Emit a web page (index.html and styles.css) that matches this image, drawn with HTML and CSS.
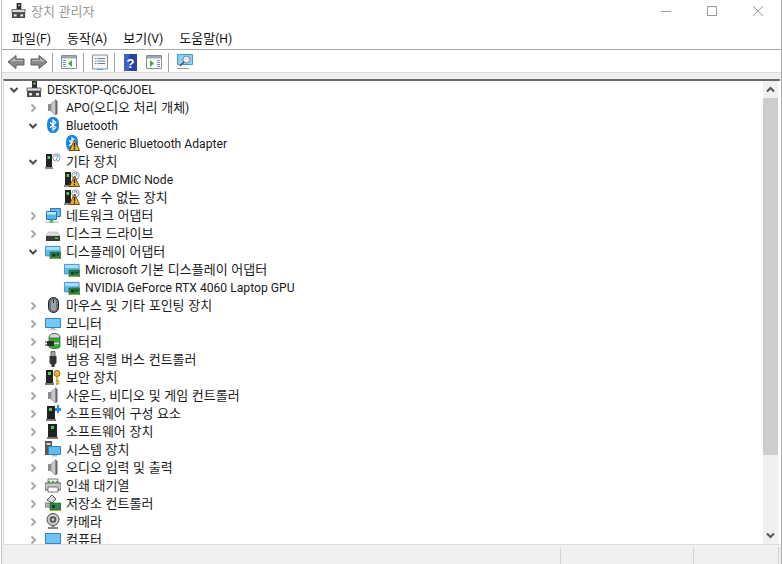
FILE: index.html
```html
<!DOCTYPE html>
<html lang="ko">
<head>
<meta charset="utf-8">
<title>장치 관리자</title>
<link rel="stylesheet" href="styles.css">
</head>
<body>
<svg class="defs" aria-hidden="true">
  <defs>
    <symbol id="open" viewBox="0 0 10 10"><path d="M1.500 3l3.500 3.500L8.500 3" fill="none" stroke="#4a4a4a" stroke-width="2"/></symbol>
    <symbol id="closed" viewBox="0 0 10 10"><path d="M3.500 1.500L7 5 3.500 8.500" fill="none" stroke="#a8a8a8" stroke-width="2"/></symbol>
    <symbol id="warn" viewBox="0 0 16 16"><path d="M10.500 5L15.600 15.500H5.400z" fill="#f3b32a" stroke="#5e4008" stroke-width=".9"/><path d="M9.800 8h1.400v4.200H9.800zM9.800 13h1.400v1.500H9.800z" fill="#1c1c1c"/></symbol>
    <symbol id="root" viewBox="0 0 16 16"><path d="M6 0h5v7H6z" fill="#2e2e2e"/><path d="M7.500 1.500h2v2h-2z" fill="#7ed07a"/><path d="M1 7h14v3H1z" fill="#e4e4e4" stroke="#444" stroke-width=".8"/><path d="M1 10h14v6H1z" fill="#484848"/><path d="M3 12h3v2.500H3zM10 12h3v2.500h-3z" fill="#e2e2e2"/></symbol>
    <symbol id="speaker" viewBox="0 0 16 16"><path d="M3 5h3v7H3z" fill="#8e8e8e"/><path d="M6 5l5-4.500v16L6 12z" fill="#c8c8c8" stroke="#8a8a8a" stroke-width=".7"/><path d="M10.500 .5v16l2-2V2.500z" fill="#666"/></symbol>
    <symbol id="bt" viewBox="0 0 16 16"><path d="M8 0c4 0 6 2.500 6 8s-2 8-6 8-6-2.500-6-8 2-8 6-8z" fill="#1685e8"/><path d="M5 5.200L10.800 10.500 8 13.200V2.800L10.800 5.500 5 10.800" fill="none" stroke="#fff" stroke-width="1.200"/></symbol>
    <symbol id="unknown" viewBox="0 0 16 16"><path d="M1 1h6v13H1z" fill="#222"/><path d="M2.500 3h2.500v3H2.500z" fill="#4bd04b"/><path d="M0 14h8v2H0z" fill="#888"/><circle cx="11.500" cy="4.500" r="3.700" fill="#f4f8fc" stroke="#8a9aa8"/><path d="M10 3.500c.3-1.500 3-1.500 3 0 0 1-1.500 1-1.500 2M11.200 6.500h.8" fill="none" stroke="#4c84c0"/></symbol>
    <symbol id="network" viewBox="0 0 16 16"><path d="M5.500 1.500h10v8h-10z" fill="#68b8ec" stroke="#2a7cb8"/><path d="M1.500 4.500h10v8h-10z" fill="#58b4ec" stroke="#1f78b4"/><path d="M2 5h9v2.500H2z" fill="#bfe4fa"/><path d="M5 13h3v1.500H5z" fill="#44b044"/><path d="M0 14.500h14V16H0z" fill="#cfcfcf"/><path d="M4 14.500h5v1H4z" fill="#35b035"/></symbol>
    <symbol id="disk" viewBox="0 0 16 16"><path d="M3.500 7h9l2.500 4H1z" fill="#dcdcdc" stroke="#aaa" stroke-width=".6"/><path d="M1 11h14v5H1z" fill="#3a3a3a"/><path d="M10 12.500h3V14h-3z" fill="#4cd04c"/></symbol>
    <symbol id="display" viewBox="0 0 16 16"><path d="M.4 3.400h14.700v9.500H.4z" fill="#5db9ee" stroke="#2b87c0" stroke-width=".8"/><path d="M1 4h13.500v3H1z" fill="#a8dcf8"/><path d="M5 9h10.500v6.500H5z" fill="#2c8a4c" stroke="#15602f" stroke-width=".6"/><path d="M7 10.500h3.500v3H7zM11.500 10.500h2.500v2h-2.500z" fill="#143c20"/><path d="M6 15.200h8v.8H6z" fill="#c9a227"/></symbol>
    <symbol id="mouse" viewBox="0 0 16 16"><rect x="3.500" y=".5" width="10" height="15" rx="5" fill="#6e747c" stroke="#1c1c1c"/><path d="M6 4c0-2 5-2 5 0v8c0 2-5 2-5 0z" fill="#9aa0a8"/><path d="M8 2h1v4H8z" fill="#222"/></symbol>
    <symbol id="monitor" viewBox="0 0 16 16"><path d="M.5 3.500h15v9H.5z" fill="#76c8f6" stroke="#2b87c0"/><path d="M6 13h4v1.500H6z" fill="#b0b0b0"/><path d="M3 14.500h10v1H3z" fill="#c8c8c8"/></symbol>
    <symbol id="battery" viewBox="0 0 16 16"><ellipse cx="9.500" cy="4" rx="5.500" ry="3.500" fill="#d8d8d8" stroke="#555"/><path d="M4 5h11v9c-2 2-9 2-11 0z" fill="#3aa83a" stroke="#1b6a1b" stroke-width=".7"/><path d="M2 8h7v5H2z" fill="#2c2c2c"/><path d="M0 9h3M0 12h3" stroke="#333"/><path d="M9 10.500h5" stroke="#ddd" stroke-width="1.500"/></symbol>
    <symbol id="usb" viewBox="0 0 16 16"><path d="M6 .5h4v5H6z" fill="#a0a0a0" stroke="#444" stroke-width=".7"/><path d="M4.500 5h7v7l-2 2v2h-3v-2l-2-2z" fill="#333"/></symbol>
    <symbol id="security" viewBox="0 0 16 16"><path d="M1 1h7v13H1z" fill="#222"/><path d="M3 3h3v3H3z" fill="#4bd04b"/><path d="M0 14h9v2H0z" fill="#777"/><circle cx="12" cy="4.500" r="3" fill="#e2b646" stroke="#8a6a14"/><path d="M12 7.500V16M12 12h2.500M12 14.500h2.500" stroke="#c99a20" stroke-width="1.500"/></symbol>
    <symbol id="swcomp" viewBox="0 0 16 16"><path d="M2 1h8v13H2z" fill="#222"/><path d="M4 3h3v3H4z" fill="#4bd04b"/><path d="M1 14h10v2H1z" fill="#777"/><path d="M10 3h2V0h2v3h2v3h-2v2h-2V6h-2z" fill="#2f8fd8"/></symbol>
    <symbol id="swdev" viewBox="0 0 16 16"><path d="M3 1h9v13H3z" fill="#222"/><path d="M6 3h3v3H6z" fill="#4bd04b"/><path d="M2 14h11v2H2z" fill="#777"/></symbol>
    <symbol id="system" viewBox="0 0 16 16"><path d="M0 0h7v14H0z" fill="#555"/><path d="M1.500 2h4v2h-4z" fill="#d8d8d8"/><path d="M3.500 5.500h12v8h-12z" fill="#5dbcf0" stroke="#2b87c0"/><path d="M7 14h5v1.500H7z" fill="#b8b8b8"/></symbol>
    <symbol id="printer" viewBox="0 0 16 16"><path d="M3 2h10v4H3z" fill="#eee" stroke="#666" stroke-width=".8"/><path d="M0 6h16v7H0z" fill="#c8c8c8" stroke="#444" stroke-width=".8"/><path d="M3 4h2v1.500H3zM7 4h2v1.500H7zM11 4h2v1.500h-2z" fill="#35b035"/><path d="M3 10h10v5H3z" fill="#fff" stroke="#555" stroke-width=".8"/></symbol>
    <symbol id="storage" viewBox="0 0 16 16"><path d="M2 5l5-5 4 4-4 4z" fill="#ddd" stroke="#444" stroke-width=".9"/><path d="M0 8h9v4H0z" fill="#b8b8b8" stroke="#555" stroke-width=".7"/><path d="M5 8h11v7H5z" fill="#2c8a4c" stroke="#15602f" stroke-width=".6"/><path d="M7 10h3v3H7z" fill="#143c20"/><path d="M5 15h11v1H5z" fill="#c9a227"/></symbol>
    <symbol id="camera" viewBox="0 0 16 16"><circle cx="8" cy="6.500" r="6" fill="#cfcfcf" stroke="#444"/><circle cx="8" cy="6.500" r="3.300" fill="#555"/><circle cx="8" cy="6.500" r="1.500" fill="#bcd"/><path d="M6.500 12.500h3V14h-3zM3 14h10v2H3z" fill="#888"/></symbol>
    <symbol id="computer" viewBox="0 0 16 16"><path d="M.5 2.500h15v10H.5z" fill="#72c2f4" stroke="#2b87c0"/></symbol>
    <symbol id="arrow" viewBox="0 0 18 16"><path d="M9 1.500L1 8l8 6.500V11h8V5H9z" fill="#8a8a8a" stroke="#5e5e5e"/><path d="M3 8l5-4v2h8v1H8z" fill="#bdbdbd"/></symbol>
    <symbol id="tb-left" viewBox="0 0 16 16"><path d="M.5 1.500h15v13H.5z" fill="#fff" stroke="#7f8f9c"/><path d="M1 2h14v2.500H1z" fill="#9aa7b2"/><path d="M2 6h3v1H2zM2 8h3v1H2zM2 10h3v1H2zM2 12h3v1H2z" fill="#6f8ea8"/><path d="M11 6v7L7 9.500z" fill="#38b038"/></symbol>
    <symbol id="tb-right" viewBox="0 0 16 16"><path d="M.5 1.500h15v13H.5z" fill="#fff" stroke="#7f8f9c"/><path d="M1 2h14v2.500H1z" fill="#9aa7b2"/><path d="M11 6h3v1h-3zM11 8h3v1h-3zM11 10h3v1h-3zM11 12h3v1h-3z" fill="#6f8ea8"/><path d="M4 6v7l4-3.500z" fill="#38b038"/></symbol>
    <symbol id="tb-props" viewBox="0 0 16 16"><path d="M.5 1h15v14H.5z" fill="#f2f4f6" stroke="#8a8f94"/><path d="M3 4h1.500v1H3zM3 6.500h1.500v1H3zM3 9h1.500v1H3zM5.500 4H13v1H5.500zM5.500 6.500H13v1H5.500zM5.500 9H13v1H5.500z" fill="#6d8298"/><path d="M5 15h6v1H5z" fill="#35a8e8"/></symbol>
    <symbol id="tb-help" viewBox="0 0 13 17"><path d="M0 0h13v17H0z" fill="#2743a8"/><path d="M0 0h5v17H0z" fill="#3f62c6"/><text x="6.500" y="14" class="qmark">?</text></symbol>
    <symbol id="tb-scan" viewBox="0 0 16 16"><path d="M.5 .5h15v10H.5z" fill="#8dd0f6" stroke="#3f9ad0"/><circle cx="9.500" cy="5.500" r="3.500" fill="#dcecf4" stroke="#7b8a94"/><path d="M7 8l-4 4" stroke="#555" stroke-width="1.600"/><path d="M0 14h12v1H0z" fill="#999"/></symbol>
    <symbol id="win-warn-bt" viewBox="0 0 16 16"><use href="#bt"/><use href="#warn"/></symbol>
    <symbol id="win-warn-un" viewBox="0 0 16 16"><use href="#unknown"/><use href="#warn"/></symbol>
  </defs>
</svg>
<div class="window">
  <header class="titlebar">
    <svg class="title-icon"><use href="#root"/></svg>
    <span class="title-text ko">장치 관리자</span>
    <div class="controls">
      <svg class="ctl" viewBox="0 0 10 10"><path d="M0 5.500h10" stroke="#999"/></svg>
      <svg class="ctl" viewBox="0 0 10 10"><path d="M.5 .5h9v9h-9z" fill="none" stroke="#999"/></svg>
      <svg class="ctl" viewBox="0 0 10 10"><path d="M0 0l10 10M10 0L0 10" stroke="#999"/></svg>
    </div>
  </header>
  <nav class="menubar">
    <span class="menu"><span class="ko">파일</span>(F)</span>
    <span class="menu"><span class="ko">동작</span>(A)</span>
    <span class="menu"><span class="ko">보기</span>(V)</span>
    <span class="menu"><span class="ko">도움말</span>(H)</span>
  </nav>
  <div class="toolbar">
    <svg class="tb-arrow"><use href="#arrow"/></svg>
    <svg class="tb-arrow flip"><use href="#arrow"/></svg>
    <i class="sep"></i>
    <svg class="tb-ic"><use href="#tb-left"/></svg>
    <i class="sep"></i>
    <svg class="tb-ic"><use href="#tb-props"/></svg>
    <i class="sep"></i>
    <svg class="tb-ic help"><use href="#tb-help"/></svg>
    <svg class="tb-ic"><use href="#tb-right"/></svg>
    <i class="sep"></i>
    <svg class="tb-ic"><use href="#tb-scan"/></svg>
  </div>
  <div class="band"></div>
  <main class="pane">
    <ul class="tree">
      <li class="row l0"><svg class="chev"><use href="#open"/></svg><svg class="ic"><use href="#root"/></svg><span class="en">DESKTOP-QC6JOEL</span></li>
      <li class="row l1"><svg class="chev"><use href="#closed"/></svg><svg class="ic"><use href="#speaker"/></svg><span class="en mix">APO(<span class="ko">오디오 처리 개체</span>)</span></li>
      <li class="row l1"><svg class="chev"><use href="#open"/></svg><svg class="ic"><use href="#bt"/></svg><span class="en">Bluetooth</span></li>
      <li class="row l2"><svg class="chev"></svg><svg class="ic"><use href="#win-warn-bt"/></svg><span class="en">Generic Bluetooth Adapter</span></li>
      <li class="row l1"><svg class="chev"><use href="#open"/></svg><svg class="ic"><use href="#unknown"/></svg><span class="ko">기타 장치</span></li>
      <li class="row l2"><svg class="chev"></svg><svg class="ic"><use href="#win-warn-un"/></svg><span class="en">ACP DMIC Node</span></li>
      <li class="row l2"><svg class="chev"></svg><svg class="ic"><use href="#win-warn-un"/></svg><span class="ko">알 수 없는 장치</span></li>
      <li class="row l1"><svg class="chev"><use href="#closed"/></svg><svg class="ic"><use href="#network"/></svg><span class="ko">네트워크 어댑터</span></li>
      <li class="row l1"><svg class="chev"><use href="#closed"/></svg><svg class="ic"><use href="#disk"/></svg><span class="ko">디스크 드라이브</span></li>
      <li class="row l1"><svg class="chev"><use href="#open"/></svg><svg class="ic"><use href="#display"/></svg><span class="ko">디스플레이 어댑터</span></li>
      <li class="row l2"><svg class="chev"></svg><svg class="ic"><use href="#display"/></svg><span class="en mix">Microsoft <span class="ko">기본 디스플레이 어댑터</span></span></li>
      <li class="row l2"><svg class="chev"></svg><svg class="ic"><use href="#display"/></svg><span class="en">NVIDIA GeForce RTX 4060 Laptop GPU</span></li>
      <li class="row l1"><svg class="chev"><use href="#closed"/></svg><svg class="ic"><use href="#mouse"/></svg><span class="ko">마우스 및 기타 포인팅 장치</span></li>
      <li class="row l1"><svg class="chev"><use href="#closed"/></svg><svg class="ic"><use href="#monitor"/></svg><span class="ko">모니터</span></li>
      <li class="row l1"><svg class="chev"><use href="#closed"/></svg><svg class="ic"><use href="#battery"/></svg><span class="ko">배터리</span></li>
      <li class="row l1"><svg class="chev"><use href="#closed"/></svg><svg class="ic"><use href="#usb"/></svg><span class="ko">범용 직렬 버스 컨트롤러</span></li>
      <li class="row l1"><svg class="chev"><use href="#closed"/></svg><svg class="ic"><use href="#security"/></svg><span class="ko">보안 장치</span></li>
      <li class="row l1"><svg class="chev"><use href="#closed"/></svg><svg class="ic"><use href="#speaker"/></svg><span class="ko">사운드, 비디오 및 게임 컨트롤러</span></li>
      <li class="row l1"><svg class="chev"><use href="#closed"/></svg><svg class="ic"><use href="#swcomp"/></svg><span class="ko">소프트웨어 구성 요소</span></li>
      <li class="row l1"><svg class="chev"><use href="#closed"/></svg><svg class="ic"><use href="#swdev"/></svg><span class="ko">소프트웨어 장치</span></li>
      <li class="row l1"><svg class="chev"><use href="#closed"/></svg><svg class="ic"><use href="#system"/></svg><span class="ko">시스템 장치</span></li>
      <li class="row l1"><svg class="chev"><use href="#closed"/></svg><svg class="ic"><use href="#speaker"/></svg><span class="ko">오디오 입력 및 출력</span></li>
      <li class="row l1"><svg class="chev"><use href="#closed"/></svg><svg class="ic"><use href="#printer"/></svg><span class="ko">인쇄 대기열</span></li>
      <li class="row l1"><svg class="chev"><use href="#closed"/></svg><svg class="ic"><use href="#storage"/></svg><span class="ko">저장소 컨트롤러</span></li>
      <li class="row l1"><svg class="chev"><use href="#closed"/></svg><svg class="ic"><use href="#camera"/></svg><span class="ko">카메라</span></li>
      <li class="row l1"><svg class="chev"><use href="#closed"/></svg><svg class="ic"><use href="#computer"/></svg><span class="ko">컴퓨터</span></li>
    </ul>
    <div class="scrollbar">
      <svg class="sb-btn" viewBox="0 0 15 17"><path d="M4 10.500l3.500-3.500 3.500 3.500" fill="none" stroke="#555" stroke-width="2"/></svg>
      <div class="thumb"></div>
      <svg class="sb-btn end" viewBox="0 0 15 17"><path d="M4 6.500l3.500 3.500 3.500-3.500" fill="none" stroke="#555" stroke-width="2"/></svg>
    </div>
  </main>
  <footer class="statusbar">
    <div class="cell main"></div>
    <div class="cell mid"></div>
    <div class="cell last"></div>
  </footer>
</div>
</body>
</html>
```
FILE: styles.css
```css
* { box-sizing: border-box; }
html, body { margin: 0; height: 100%; background: #fff; overflow: hidden; }
body { font: 12.15px/18px Roboto, "Noto Sans CJK KR", sans-serif; color: #1a1a1a; }
.defs { width: 0; height: 0; display: block; }
.qmark { font: bold 13px "Liberation Sans", sans-serif; fill: #fff; text-anchor: middle; }
.ko { font-family: "Noto Sans CJK KR", sans-serif; font-size: 13px; }
.window { display: flex; flex-direction: column; width: 781px; height: 564px; margin-left: 1px; border-left: 1px solid #c4c4c4; border-right: 1px solid #aaa; }

.titlebar { display: flex; align-items: center; height: 29px; padding: 0 0 8px 9px; flex: none; }
.title-icon { width: 15px; height: 15px; }
.title-text { margin-left: 5px; color: #999; line-height: 18px; }
.controls { display: flex; margin-left: auto; margin-right: 18px; gap: 36px; }
.ctl { width: 10px; height: 10px; }

.menubar { display: flex; height: 21px; flex: none; padding: 0 0 0 10px; gap: 16px; align-items: flex-start; border-bottom: 1px solid #a8a8a8; }
.menu { line-height: 17px; color: #111; }

.toolbar { display: flex; align-items: center; height: 22px; flex: none; padding: 2px 0 0 5px; }
.tb-arrow { width: 18px; height: 16px; margin-right: 5px; }
.flip { transform: scaleX(-1); }
.sep { width: 1px; height: 19px; background: #a0a0a0; margin: 0 8px 0 0; }
.tb-arrow.flip { margin-right: 4px; }
.tb-ic { width: 16px; height: 16px; margin-right: 6px; }
.help { width: 13px; height: 17px; margin: 0 9px 0 1px; }

.band { height: 7px; flex: none; background: #f0f0f0; border-top: 1px solid #dcdcdc; }

.pane { flex: 1; min-height: 0; display: flex; margin: 0 1px; border-top: 2px solid #6b6b6b; border-left: 1px solid #d0d0d0; border-bottom: 1px solid #dcdcdc; overflow: hidden; }
.tree { flex: 1; list-style: none; margin: 0; padding: 0; min-width: 0; overflow: hidden; }
.row { display: flex; align-items: center; height: 18px; white-space: nowrap; }
.row.l0 { padding-left: 5px; }
.row.l1 { padding-left: 24px; }
.row.l2 { padding-left: 43px; }
.chev { width: 10px; height: 10px; flex: none; margin-right: 7px; }
.ic { width: 16px; height: 16px; flex: none; margin: -2px 5px 0 0; }
.row > .ko, .mix { margin-top: -2px; }

.scrollbar { width: 15px; flex: none; display: flex; flex-direction: column; background: #f0f0f0; margin-right: 2px; }
.sb-btn { width: 15px; height: 17px; flex: none; }
.thumb { height: 357px; background: #cdcdcd; flex: none; }
.sb-btn.end { margin-top: auto; }

.statusbar { display: flex; flex: none; height: 19px; background: #f0f0f0; }
.cell { border-right: 1px solid #d4d4d4; margin-top: 2px; }
.main { width: 559px; }
.mid { width: 133px; }
.last { width: 85px; }
```
